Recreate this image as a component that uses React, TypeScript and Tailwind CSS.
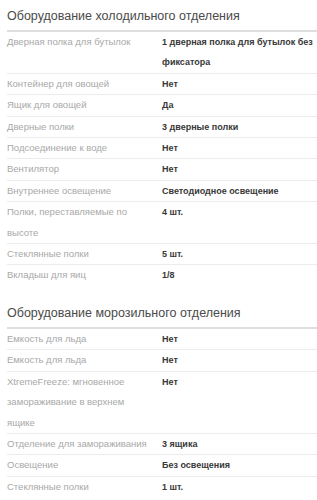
type Spec = { label: string; value: string };

const fridge: Spec[] = [
  { label: "Дверная полка для бутылок", value: "1 дверная полка для бутылок без фиксатора" },
  { label: "Контейнер для овощей", value: "Нет" },
  { label: "Ящик для овощей", value: "Да" },
  { label: "Дверные полки", value: "3 дверные полки" },
  { label: "Подсоединение к воде", value: "Нет" },
  { label: "Вентилятор", value: "Нет" },
  { label: "Внутреннее освещение", value: "Светодиодное освещение" },
  { label: "Полки, переставляемые по высоте", value: "4 шт." },
  { label: "Стеклянные полки", value: "5 шт." },
  { label: "Вкладыш для яиц", value: "1/8" },
];

const freezer: Spec[] = [
  { label: "Емкость для льда", value: "Нет" },
  { label: "Емкость для льда", value: "Нет" },
  { label: "XtremeFreeze: мгновенное замораживание в верхнем ящике", value: "Нет" },
  { label: "Отделение для замораживания", value: "3 ящика" },
  { label: "Освещение", value: "Без освещения" },
  { label: "Стеклянные полки", value: "1 шт." },
];

function Section({ title, rows }: { title: string; rows: Spec[] }) {
  return (
    <section>
      <h2 className="border-b-2 border-[#dedede] pb-[4px] text-[12.5px] leading-[20px] text-[#4a4a4a]">
        {title}
      </h2>
      <div>
        {rows.map((row, i) => (
          <div
            key={i}
            className={`grid grid-cols-[155px_1fr] leading-[20.4px] ${
              i === rows.length - 1 ? "" : "border-b border-[#ececec]"
            }`}
          >
            <div className="pr-[10px] text-[9.5px] text-[#a8a8a8]">{row.label}</div>
            <div className="text-[9px] font-bold text-[#383838]">{row.value}</div>
          </div>
        ))}
      </div>
    </section>
  );
}

export default function App() {
  return (
    <main className="h-[500px] overflow-hidden bg-white pl-[7px] pt-[6px] font-['Liberation_Sans',Arial,sans-serif]">
      <Section title="Оборудование холодильного отделения" rows={fridge} />
      <div className="mt-[17px]">
        <Section title="Оборудование морозильного отделения" rows={freezer} />
      </div>
    </main>
  );
}
